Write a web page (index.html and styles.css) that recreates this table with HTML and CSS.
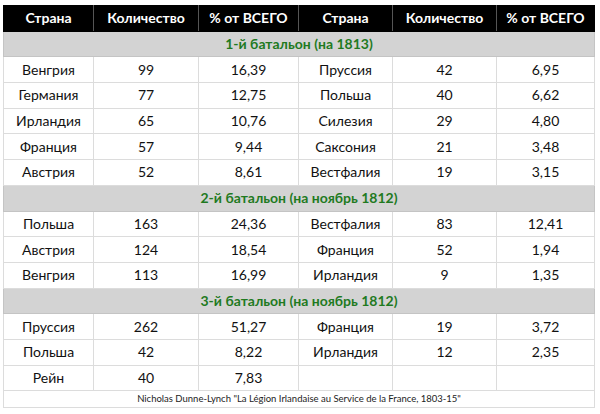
FILE: index.html
```html
<!DOCTYPE html>
<html lang="ru">
<head>
<meta charset="utf-8">
<link rel="stylesheet" href="styles.css">
</head>
<body>
<table class="grid">
  <colgroup>
    <col class="c1"><col class="c2"><col class="c3"><col class="c4"><col class="c5"><col class="c6">
  </colgroup>
  <thead>
    <tr class="head">
      <th>Страна</th><th>Количество</th><th>% от ВСЕГО</th><th>Страна</th><th>Количество</th><th>% от ВСЕГО</th>
    </tr>
  </thead>
  <tbody>
    <tr class="section"><td colspan="6">1-й батальон (на 1813)</td></tr>
    <tr><td>Венгрия</td><td>99</td><td>16,39</td><td>Пруссия</td><td>42</td><td>6,95</td></tr>
    <tr><td>Германия</td><td>77</td><td>12,75</td><td>Польша</td><td>40</td><td>6,62</td></tr>
    <tr><td>Ирландия</td><td>65</td><td>10,76</td><td>Силезия</td><td>29</td><td>4,80</td></tr>
    <tr><td>Франция</td><td>57</td><td>9,44</td><td>Саксония</td><td>21</td><td>3,48</td></tr>
    <tr><td>Австрия</td><td>52</td><td>8,61</td><td>Вестфалия</td><td>19</td><td>3,15</td></tr>
    <tr class="section"><td colspan="6">2-й батальон (на ноябрь 1812)</td></tr>
    <tr><td>Польша</td><td>163</td><td>24,36</td><td>Вестфалия</td><td>83</td><td>12,41</td></tr>
    <tr><td>Австрия</td><td>124</td><td>18,54</td><td>Франция</td><td>52</td><td>1,94</td></tr>
    <tr><td>Венгрия</td><td>113</td><td>16,99</td><td>Ирландия</td><td>9</td><td>1,35</td></tr>
    <tr class="section"><td colspan="6">3-й батальон (на ноябрь 1812)</td></tr>
    <tr><td>Пруссия</td><td>262</td><td>51,27</td><td>Франция</td><td>19</td><td>3,72</td></tr>
    <tr><td>Польша</td><td>42</td><td>8,22</td><td>Ирландия</td><td>12</td><td>2,35</td></tr>
    <tr><td>Рейн</td><td>40</td><td>7,83</td><td></td><td></td><td></td></tr>
    <tr class="source"><td colspan="6">Nicholas Dunne-Lynch "La Légion Irlandaise au Service de la France, 1803-15"</td></tr>
  </tbody>
</table>
</body>
</html>
```

FILE: styles.css
```css
html, body {
  margin: 0;
  padding: 0;
  background: #ffffff;
}
body {
  padding: 5px 6px 0 3px;
  font-family: Lato, "Open Sans", "Liberation Sans", sans-serif;
  color: #111;
}
.grid {
  border-collapse: collapse;
  table-layout: fixed;
  width: 591px;
}
.c1 { width: 90px; }
.c2 { width: 105px; }
.c3 { width: 100px; }
.c4 { width: 94px; }
.c5 { width: 104px; }
.c6 { width: 98px; }

.grid th, .grid td {
  height: 24.7px;
  padding: 0;
  text-align: center;
  vertical-align: middle;
  font-size: 14px;
  line-height: 16px;
  border: 1px solid #dcdcdc;
  white-space: nowrap;
}
.head th {
  background: #000;
  color: #fff;
  font-weight: 700;
  border-color: #555 #555 #000;
  border-top-color: #000;
}
.head th:first-child { border-left-color: #000; }
.head th:last-child { border-right-color: #000; }
.section td {
  background: #d3d3d3;
  color: #1f7a1f;
  font-weight: 700;
  border-color: #c4c4c4;
}
.source td {
  height: 16px;
  line-height: 12px;
  font-size: 9.5px;
  color: #222;
}
```
